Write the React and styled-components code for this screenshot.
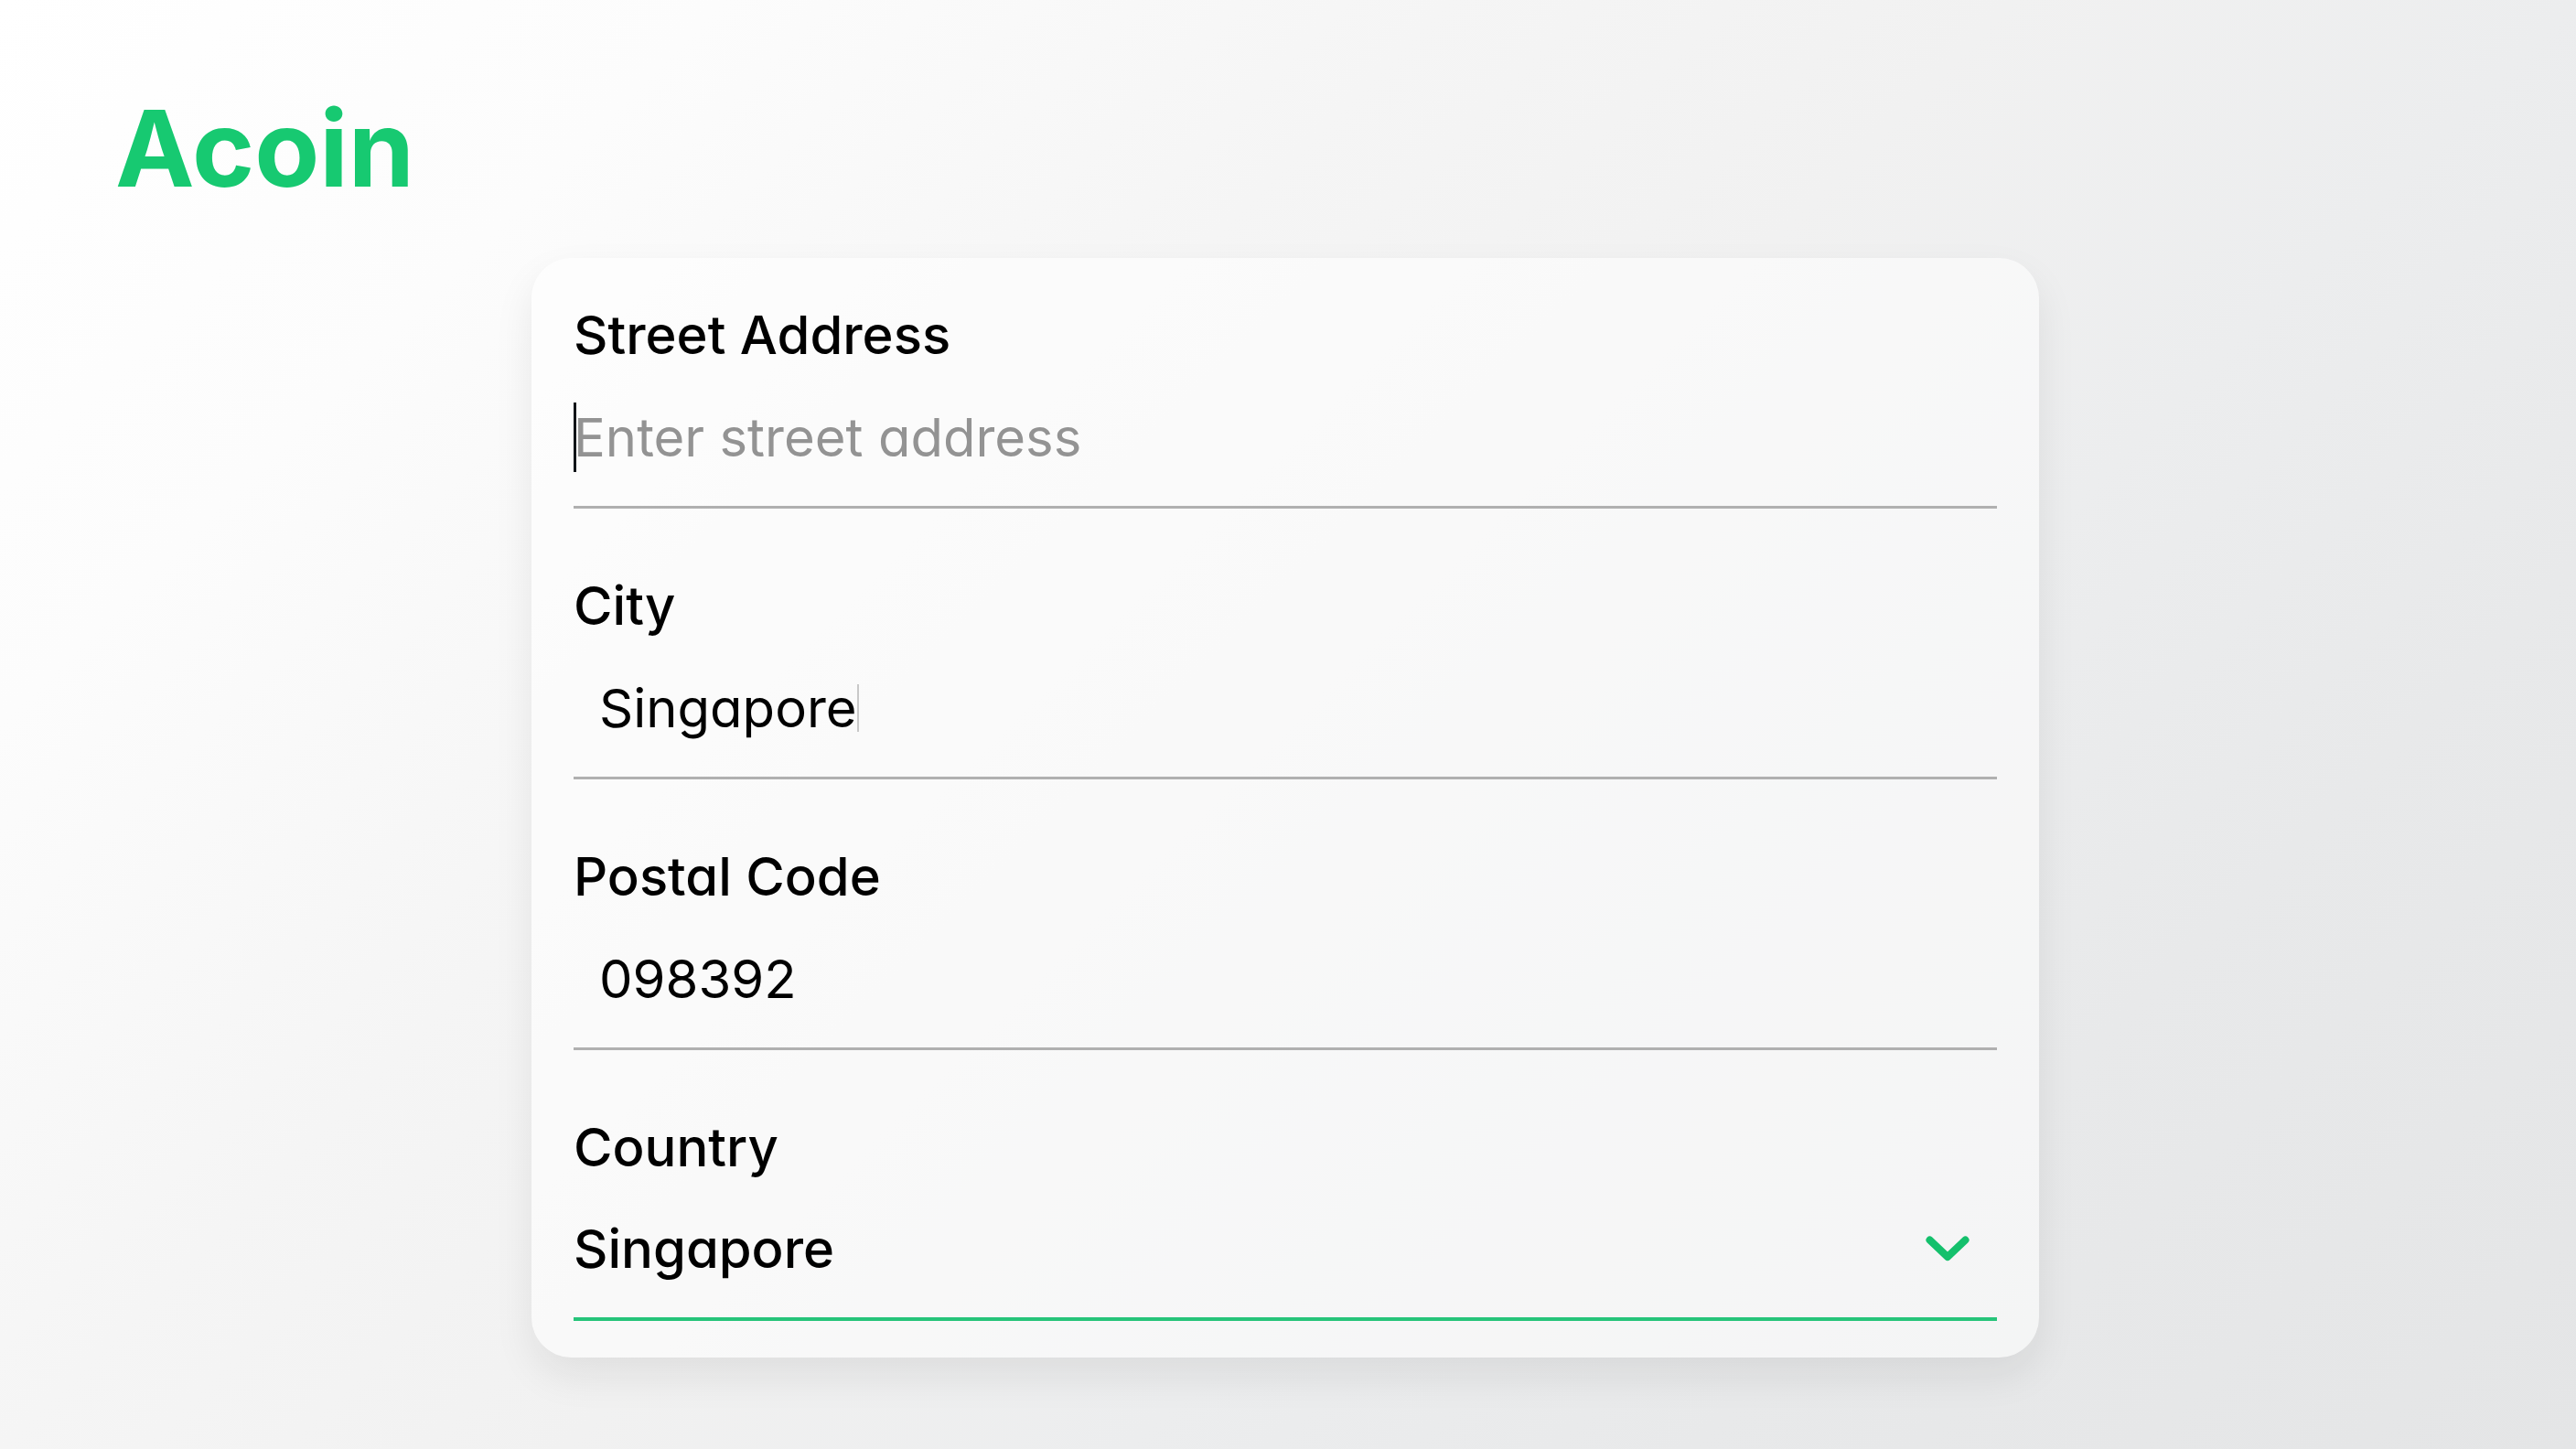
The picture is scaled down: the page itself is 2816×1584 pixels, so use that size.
import React, { useState } from 'react'
import styled, { createGlobalStyle } from 'styled-components'

const App = () => {
  const [street, setStreet] = useState('')
  const [city, setCity] = useState('Singapore')
  const [postal, setPostal] = useState('098392')
  const [country, setCountry] = useState('Singapore')

  return (
    <Page>
      <GlobalStyle />
      <Header>
        <Logo>Acoin</Logo>
      </Header>
      <Main>
        <AddressForm>
          <Field>
            <Label htmlFor='street'>Street Address</Label>
            <Control>
              <Caret $tall />
              <Input
                id='street'
                placeholder='Enter street address'
                value={street}
                onChange={(e) => setStreet(e.target.value)}
              />
            </Control>
          </Field>
          <Field>
            <Label htmlFor='city'>City</Label>
            <Control $indent>
              <Input id='city' $fit value={city} onChange={(e) => setCity(e.target.value)} />
              <Caret />
            </Control>
          </Field>
          <Field>
            <Label htmlFor='postal'>Postal Code</Label>
            <Control $indent>
              <Input id='postal' value={postal} onChange={(e) => setPostal(e.target.value)} />
            </Control>
          </Field>
          <Field>
            <Label htmlFor='country'>Country</Label>
            <Control $active>
              <Select id='country' value={country} onChange={(e) => setCountry(e.target.value)}>
                <option>Singapore</option>
                <option>Malaysia</option>
                <option>Indonesia</option>
              </Select>
              <Chevron viewBox='0 0 48 28' aria-hidden='true'>
                <path d='M4.5 4.5 L24 23 L43.5 4.5' />
              </Chevron>
            </Control>
          </Field>
        </AddressForm>
      </Main>
    </Page>
  )
}

const GlobalStyle = createGlobalStyle`
  * {
    box-sizing: border-box;
  }
  body {
    margin: 0;
    font-family: Inter, "Open Sans", sans-serif;
    font-feature-settings: "cv11";
    color: #000;
  }
`

const Page = styled.div`
  min-height: 100vh;
  background: linear-gradient(135deg, #ffffff 0%, #fcfcfc 18%, #f5f5f5 36%, #f1f1f1 50%, #ecedee 64%, #e8e9ea 78%, #e4e5e6 100%);
`

const Header = styled.header`
  padding: 92px 126px 0;
`

const Logo = styled.h1`
  margin: 0;
  font-size: 116px;
  font-weight: 700;
  line-height: 140px;
  color: #17c971;
`

const Main = styled.main`
  display: flex;
  justify-content: center;
  padding: 50px 48px 98px 42px;
`

const AddressForm = styled.form`
  width: 100%;
  max-width: 1648px;
  padding: 42px 46px 40px;
  border-radius: 44px;
  background: rgba(255, 255, 255, 0.55);
  box-shadow: 0 20px 44px rgba(20, 20, 30, 0.08);
  display: flex;
  flex-direction: column;
  gap: 64px;
`

const Field = styled.div`
  display: flex;
  flex-direction: column;
`

const Label = styled.label`
  font-size: 58px;
  font-weight: 500;
  line-height: 84px;
`

const Control = styled.div`
  display: flex;
  align-items: center;
  height: 148px;
  padding-bottom: 6px;
  padding-left: ${({ $indent }) => ($indent ? '28px' : '0')};
  border-bottom: ${({ $active }) => ($active ? '4px solid #26c47a' : '3px solid #b0b0b0')};
`

const Input = styled.input`
  ${({ $fit }) => ($fit ? 'field-sizing: content;' : 'flex: 1;')}
  min-width: 0;
  height: 84px;
  padding: 0;
  border: none;
  outline: none;
  background: transparent;
  font: inherit;
  font-feature-settings: inherit;
  font-size: 58px;
  color: inherit;

  &::placeholder {
    color: #939393;
    opacity: 1;
  }
`

const Caret = styled.span`
  flex: none;
  width: ${({ $tall }) => ($tall ? '3px' : '2px')};
  height: ${({ $tall }) => ($tall ? '76px' : '52px')};
  margin-right: ${({ $tall }) => ($tall ? '-3px' : '0')};
  background: ${({ $tall }) => ($tall ? '#111418' : '#c8c8c8')};
`

const Select = styled.select`
  appearance: none;
  flex: 1;
  height: 84px;
  padding: 0;
  border: none;
  outline: none;
  background: transparent;
  font: inherit;
  font-feature-settings: inherit;
  font-size: 58px;
  font-weight: 500;
  color: inherit;
`

const Chevron = styled.svg`
  width: 48px;
  height: 28px;
  margin: 0 30px 0 -78px;
  pointer-events: none;

  path {
    fill: none;
    stroke: #14c06c;
    stroke-width: 8;
    stroke-linecap: round;
    stroke-linejoin: round;
  }
`

export default App
